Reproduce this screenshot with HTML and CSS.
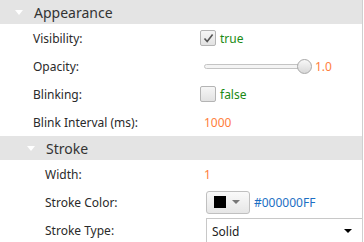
FILE: index.html
```html
<!DOCTYPE html>
<html>
<head>
<title>Properties</title>
<link rel="stylesheet" href="styles.css">
</head>
<body>

<div class="panel">

<div class="group-head"><span class="caret"></span>Appearance</div>

<div class="row">
<span class="label">Visibility:</span>
<span class="value"><span class="check checked">
<svg width="13" height="13" viewBox="0 0 13 13"><path d="M2.5 6.5 L5.2 9.6 L10.6 2.4" fill="none" stroke="#555" stroke-width="1.6"/></svg>
</span><span class="bool">true</span></span>
</div>

<div class="row">
<span class="label">Opacity:</span>
<span class="value"><span class="slider"><span class="track"></span><span class="knob"></span></span><span class="num">1.0</span></span>
</div>

<div class="row">
<span class="label">Blinking:</span>
<span class="value"><span class="check"></span><span class="bool">false</span></span>
</div>

<div class="row">
<span class="label">Blink Interval (ms):</span>
<span class="value"><span class="num pad">1000</span></span>
</div>

<div class="group-head sub"><span class="caret"></span>Stroke</div>

<div class="row sub">
<span class="label">Width:</span>
<span class="value"><span class="num pad">1</span></span>
</div>

<div class="row sub">
<span class="label">Stroke Color:</span>
<span class="value"><span class="colorbtn"><span class="swatch"></span><span class="arrow grey"></span></span><span class="hex">#000000FF</span></span>
</div>

<div class="row sub">
<span class="label">Stroke Type:</span>
<span class="value"><span class="combo">Solid<span class="arrow"></span></span></span>
</div>

</div>

</body>
</html>
```

FILE: styles.css
```css
body{
margin:0;
background:white;
font-family:"Noto Sans","Open Sans",sans-serif;
font-size:12px;
color:#2a2a2a;
}

.panel{
width:362px;
border-right:1px solid #cfcfcf;
height:242px;
overflow:hidden;
}

.group-head{
height:24px;
background:#e4e4e4;
display:flex;
align-items:center;
padding-left:15px;
font-size:14px;
color:#333;
}

.group-head.sub{
padding-left:27px;
}

.caret{
width:0;
height:0;
border-left:4px solid transparent;
border-right:4px solid transparent;
border-top:5px solid white;
margin-right:11px;
}

.row{
height:28px;
display:flex;
align-items:center;
padding-left:33px;
}

.row.sub{
padding-left:45px;
}

.label{
width:167px;
flex:none;
}

.row.sub .label{
width:155px;
}

.value{
display:flex;
align-items:center;
flex:1;
}

.check{
width:14px;
height:14px;
border:1px solid #b4b4b4;
border-radius:2px;
background:linear-gradient(#f6f6f6,#e2e2e2);
display:flex;
align-items:center;
justify-content:center;
margin-right:4px;
}

.bool{
color:#1a8a14;
}

.num{
color:#ff7e3c;
}

.pad{
padding-left:4px;
}

.slider{
position:relative;
width:112px;
height:15px;
margin-right:3px;
}

.track{
position:absolute;
left:4px;
right:2px;
top:5px;
height:3px;
border:1px solid #c4c4c4;
border-radius:3px;
background:#f4f4f4;
}

.knob{
position:absolute;
right:0;
top:0;
width:13px;
height:13px;
border:1px solid #a8a8a8;
border-radius:50%;
background:linear-gradient(#f8f8f8,#d8d8d8);
}

.colorbtn{
margin-left:6px;
border:1px solid #c0c0c0;
border-radius:3px;
background:linear-gradient(#fafafa,#e6e6e6);
display:flex;
align-items:center;
padding-left:7px;
box-sizing:border-box;
width:44px;
height:23px;
}

.swatch{
width:12px;
height:12px;
background:black;
margin-right:6px;
}

.arrow{
width:0;
height:0;
border-left:4px solid transparent;
border-right:4px solid transparent;
border-top:4px solid black;
}

.arrow.grey{
border-top-color:#777;
}

.hex{
color:#1c6fc4;
margin-left:4px;
}

.combo{
margin-left:6px;
margin-top:2px;
height:24px;
flex:1;
border:1px solid #c8c8c8;
border-right:none;
display:flex;
align-items:center;
justify-content:space-between;
padding:0 10px 0 5px;
color:#222;
}
```
